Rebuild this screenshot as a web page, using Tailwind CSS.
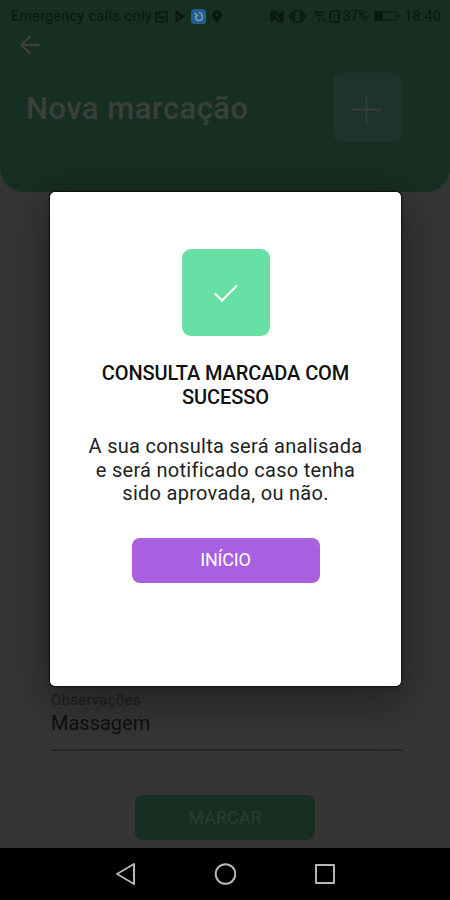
<!DOCTYPE html>
<html lang="pt">
<head>
  <meta charset="UTF-8" />
  <meta name="viewport" content="width=device-width, initial-scale=1" />
  <title>Nova marcação</title>
  <script src="https://cdn.jsdelivr.net/npm/@tailwindcss/browser@4"></script>
</head>
<body class="bg-black font-['Roboto',sans-serif]">
  <div class="relative flex flex-col w-[450px] h-[900px] overflow-hidden bg-[#353535]">

    <!-- Header -->
    <header class="h-48 shrink-0 bg-[#172e22] rounded-b-[24px]">
      <div class="flex items-center justify-between h-8 pl-[11px] pr-[9px] text-[#0a1910]">
        <div class="flex items-center">
          <span class="w-[143px] text-[14px] tracking-[0.5px] whitespace-nowrap">Emergency calls only</span>
          <svg class="w-[13px] h-[13px] ml-[1px]" viewBox="0 0 13 13" fill="none" stroke="currentColor" stroke-width="1.5">
            <path d="M1 2h11v9.500H1zM1 4h5M3 8l2-1.500 2 2 3-2" />
          </svg>
          <svg class="w-[12px] h-[13px] ml-[6px]" viewBox="0 0 12 14" fill="none" stroke="currentColor" stroke-width="2">
            <path d="M2 2l8 5-8 5zM2 2l5 5-5 5" />
          </svg>
          <svg class="w-[15px] h-[15px] ml-[5px]" viewBox="0 0 15 15">
            <rect width="15" height="15" rx="3.500" fill="#205d91" />
            <path d="M3.500 4l3 2.500-2 1c0 3 2 4.500 4 4 4-1 4-7-.500-8" fill="none" stroke="#8299aa" stroke-width="1.600" />
          </svg>
          <svg class="w-[10px] h-[13px] ml-[6px]" viewBox="0 0 10 14" fill="currentColor">
            <path fill-rule="evenodd" d="M5 0a5 5 0 0 0-5 5c0 3.500 5 9 5 9s5-5.500 5-9a5 5 0 0 0-5-5zm0 3.500a1.700 1.700 0 1 1 0 3.400 1.700 1.700 0 0 1 0-3.400z" />
          </svg>
        </div>
        <div class="flex items-center">
          <svg class="w-[14px] h-[13px]" viewBox="0 0 14 13" fill="none" stroke="currentColor" stroke-width="2.200">
            <path d="M1.500 12.500V1.500h4l5 7V3M12.500 .5v11h-4l-5-7V10" />
          </svg>
          <svg class="w-[17px] h-[13px] ml-[5px]" viewBox="0 0 17 13" fill="none" stroke="currentColor" stroke-width="1.600">
            <path d="M5 1h7v11H5zM2.800 2v9M14.200 2v9M.8 4v5M16.200 4v5" />
          </svg>
          <svg class="w-[13px] h-[11px] ml-[7px]" viewBox="0 0 13 11" fill="none" stroke="currentColor" stroke-width="1.500">
            <path d="M1 2q5-2 10 0M3 5q3-2 6 0M5 8h2M9 7l3 3" />
          </svg>
          <svg class="w-[11px] h-[13px] ml-[3px]" viewBox="0 0 11 13" fill="none" stroke="currentColor" stroke-width="1.500">
            <path d="M1 3l2-2h7v11H1zM5.500 4v4M5.500 9.500V11" />
          </svg>
          <span class="w-[28px] ml-[2px] text-[14px] whitespace-nowrap">37%</span>
          <svg class="w-[26px] h-[10px] ml-[4px]" viewBox="0 0 26 10">
            <rect x="0" y="0" width="9" height="10" rx="1" fill="currentColor" />
            <path d="M9 1h13v8H9M24.500 3v4" fill="none" stroke="currentColor" />
          </svg>
          <span class="ml-[4px] text-[14px] tracking-[0.35px]">18:40</span>
        </div>
      </div>
      <svg class="w-[20px] h-[20px] ml-[20px] mt-[3px]" viewBox="0 0 20 20" fill="none" stroke="#443f3a" stroke-width="2">
        <path d="M19.500 10H2M10.500 1L1.500 10l9 9" />
      </svg>
      <div class="flex items-center justify-between h-[69px] mt-[18px] pl-[26px] pr-12">
        <h1 class="pt-[2px] text-[31px] font-medium tracking-[0.45px] leading-none text-[#3a3f3b]">Nova marcação</h1>
        <div class="flex items-center justify-center w-[69px] h-[69px] rounded-lg bg-[#1c342a]">
          <svg class="w-[29px] h-[29px] mt-[3px] mr-[2px]" viewBox="0 0 29 29" stroke="#383c38" stroke-width="2">
            <path d="M14.500 0v29M0 14.500h29" />
          </svg>
        </div>
      </div>
    </header>

    <!-- Form, dimmed behind the dialog -->
    <main class="flex flex-col flex-1 justify-end pb-[8px]">
      <div class="w-[352px] ml-[50px] pl-px pb-[14px] border-b-2 border-[#252528]">
        <p class="text-[15px] tracking-[0.25px] leading-[18px] text-[#1e1e25]">Observações</p>
        <p class="mt-[2px] text-[20px] leading-6 text-[#101010]">Massagem</p>
      </div>
      <button class="w-[180px] h-[45px] mt-[44px] ml-[135px] rounded-lg bg-[#172e22] text-[18px] text-[#2a3d32]">MARCAR</button>
    </main>

    <!-- Android navigation bar -->
    <nav class="flex items-center justify-center gap-[78px] h-[52px] shrink-0 bg-black">
      <svg class="w-[22px] h-[22px]" viewBox="0 0 22 22" fill="none" stroke="#b5b5b5" stroke-width="2" stroke-linejoin="round">
        <path d="M20 1v20L3 11z" />
      </svg>
      <svg class="w-[22px] h-[22px]" viewBox="0 0 22 22" fill="none" stroke="#b5b5b5" stroke-width="2">
        <circle cx="11.500" cy="11" r="9.800" />
      </svg>
      <svg class="w-[22px] h-[22px]" viewBox="0 0 22 22" fill="none" stroke="#b5b5b5" stroke-width="2" stroke-linejoin="round">
        <rect x="2" y="2" width="18" height="18" />
      </svg>
    </nav>

    <!-- Success dialog -->
    <div class="absolute left-[50px] top-[192px] flex flex-col items-center w-[351px] h-[494px] pt-[57px] rounded-[5px] bg-white text-center shadow-[0_0_2px_1px_rgba(0,0,0,0.7),0_14px_40px_4px_rgba(0,0,0,0.35)]">
      <div class="flex items-center justify-center w-[88px] h-[87px] rounded-[9px] bg-[#66e0a5]">
        <svg class="w-[24px] h-[18px]" viewBox="0 0 24 18" fill="none" stroke="#fff" stroke-width="2.200">
          <path d="M1 9.500l7 7L23 1.500" />
        </svg>
      </div>
      <h2 class="mt-[25px] text-[20px] font-medium leading-6 tracking-[-0.1px] text-[#111]">CONSULTA MARCADA COM<br />SUCESSO</h2>
      <p class="mt-[26px] text-[20px] leading-[23.500px] tracking-[0.28px] text-[#222]">A sua consulta será analisada<br />e será notificado caso tenha<br />sido aprovada, ou não.</p>
      <button class="w-[188px] h-[45px] mt-[32px] pb-px rounded-lg bg-[#a860e0] text-[18px] tracking-[-0.2px] text-white">INÍCIO</button>
    </div>

  </div>
</body>
</html>
